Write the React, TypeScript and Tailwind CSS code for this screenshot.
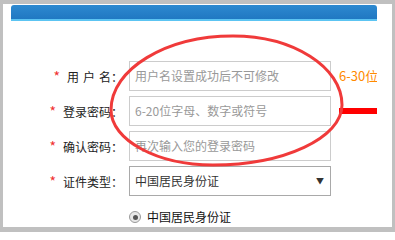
import React from 'react';

const font = { fontFamily: '"Noto Sans CJK SC", "Liberation Sans", sans-serif' };

const Label = ({ children }: { children: React.ReactNode }) => (
  <div className="w-[112px] shrink-0 text-right text-[12px] text-[#222] whitespace-nowrap">
    <span className="text-[#f03030] text-[14px] mr-[7px]">*</span>
    {children}
  </div>
);

const TextBox = ({ placeholder }: { placeholder: string }) => (
  <div className="ml-[6px] w-[202px] h-[30px] shrink-0 border border-[#cccccc] bg-white flex items-center pl-[5px] text-[12px] text-[#999] whitespace-nowrap">
    {placeholder}
  </div>
);

export default function App() {
  return (
    <div className="relative w-[395px] h-[232px] bg-[#c0c0c0] pt-[4px] pl-[3px] pr-[3px] pb-[5px]" style={font}>
      <div className="w-full h-full bg-white pt-[1px] pl-[8px]">
        <div className="w-[366px] h-full overflow-hidden">
          {/* blue title bar */}
          <div className="h-[16px] rounded-t-[3px] bg-gradient-to-b from-[#2d89d0] to-[#2078c2] border-b-2 border-[#5cc4f2]" />

          <div className="mt-[40px] flex flex-col gap-[5px]">
            <div className="flex items-center h-[30px]">
              <Label>
                <span className="tracking-[4px]">用户</span>名：
              </Label>
              <TextBox placeholder="用户名设置成功后不可修改" />
              <span className="ml-[8px] text-[13px] text-[#ff8a00] whitespace-nowrap">6-30位字母、数字或“_”</span>
            </div>

            <div className="flex items-center h-[30px]">
              <Label>登录密码：</Label>
              <TextBox placeholder="6-20位字母、数字或符号" />
              <div className="ml-[8px] flex-1 h-[6px] bg-[#ff0000]" />
            </div>

            <div className="flex items-center h-[30px]">
              <Label>确认密码：</Label>
              <TextBox placeholder="再次输入您的登录密码" />
            </div>

            <div className="flex items-center h-[30px]">
              <Label>证件类型：</Label>
              <div className="ml-[6px] w-[202px] h-[30px] shrink-0 border border-[#a9a9a9] bg-white flex items-center justify-between pl-[5px] pr-[6px] text-[12px] text-[#333]">
                <span>中国居民身份证</span>
                <span className="text-[8px] text-[#333]">▼</span>
              </div>
            </div>
          </div>

          <div className="mt-[11px] ml-[118px] flex items-center h-[20px]">
            <div className="w-[12px] h-[12px] rounded-full border border-[#9a9a9a] bg-[#e8e8e8] flex items-center justify-center">
              <div className="w-[5px] h-[5px] rounded-full bg-[#555]" />
            </div>
            <span className="ml-[6px] text-[12px] text-[#111]">中国居民身份证</span>
          </div>
        </div>
      </div>

      {/* hand-drawn red circle annotation */}
      <svg className="absolute inset-0 pointer-events-none" width="395" height="232" viewBox="0 0 395 232">
        <path
          d="M233 36 C293 36 342 67 342 105 C342 138 284 165 213 165 C157 165 111 140 111 110 C111 69 166 36 233 36 Z"
          fill="none"
          stroke="#f03a3a"
          strokeWidth="3"
        />
      </svg>
    </div>
  );
}
